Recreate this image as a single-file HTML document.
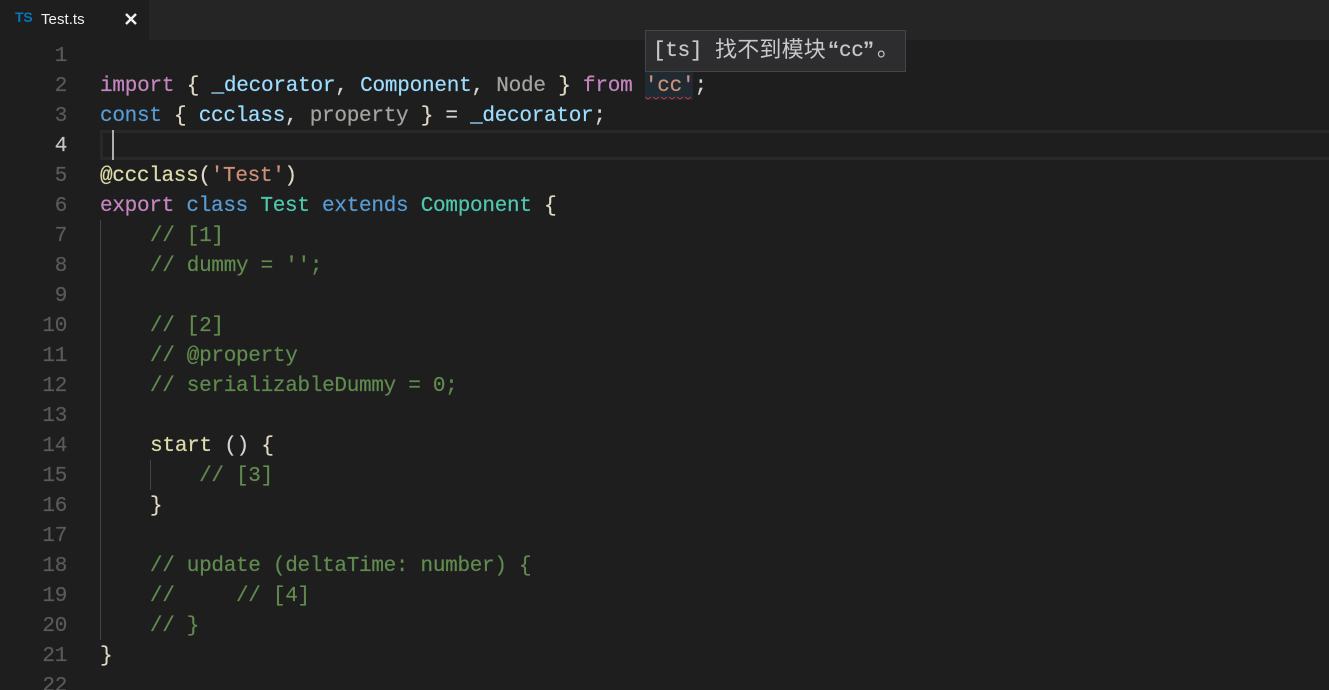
<!DOCTYPE html>
<html>
<head>
<meta charset="utf-8">
<style>
html,body{margin:0;padding:0;width:1329px;height:690px;overflow:hidden;background:#1e1e1e}
#root{position:relative;width:1329px;height:690px;overflow:hidden;background:#1e1e1e;font-family:"Liberation Mono","DejaVu Sans Mono",monospace}
.abs{position:absolute}
.ln,.cd{position:absolute;height:30px;line-height:34px;font-size:21px;white-space:pre;-webkit-text-stroke:.2px}
.ln{left:0;width:67px;text-align:right;color:#5a5a5a;letter-spacing:-.32px}
.cd{left:100px;color:#d4d4d4;letter-spacing:-.3px}
.i{left:100.7px}
.p{color:#c586c0}.k{color:#569cd6}.v{color:#9cdcfe}.t{color:#4ec9b0}.s{color:#ce9178}.c{color:#608b4e}.f{color:#dcdcaa}.u{color:#a5a5a0}.b{color:#e0d8c4}.w{color:#d4d4d4}
.tt{position:absolute;top:30px;height:42px;line-height:42px;color:#c8c8c8;white-space:pre;font-size:21px}
.cjk{font-family:"Liberation Sans","Noto Sans CJK SC",sans-serif;font-size:22px;line-height:42px}
</style>
</head>
<body>
<div id="root">
<div class="abs" style="left:149px;top:0;width:1180px;height:40px;background:#252526"></div>
<div class="abs" style="left:15px;top:8px;font:bold 14px 'Liberation Sans',sans-serif;color:#0277bd;line-height:18px;letter-spacing:-.2px">TS</div>
<div class="abs" style="left:41px;top:10px;font:15px 'Liberation Sans',sans-serif;color:#f0f0f0;line-height:20px;letter-spacing:.05px">Test.ts</div>
<svg class="abs" style="left:124px;top:12px" width="14" height="14" viewBox="0 0 14 14"><path d="M2 2L12 12M12 2L2 12" stroke="#f0f0f0" stroke-width="2.4" fill="none"/></svg>

<div class="abs" style="left:100px;top:130px;width:1229px;height:30px;box-sizing:border-box;border:3px solid #282828;border-right:0"></div>
<div class="abs" style="left:112px;top:130px;width:2px;height:30px;background:#aeafad"></div>
<div class="abs" style="left:100px;top:220px;width:1px;height:420px;background:#454545"></div>
<div class="abs" style="left:150px;top:460px;width:1px;height:30px;background:#454545"></div>
<div class="abs" style="left:645px;top:72px;width:48px;height:28px;background:#1f2a33"></div>
<svg class="abs" style="left:645px;top:96px" width="48" height="4" viewBox="0 0 48 4"><path d="M0 1L3 3L6 1M8 1L11 3L14 1M16 1L19 3L22 1M24 1L27 3L30 1M32 1L35 3L38 1M40 1L43 3L46 1" stroke="#c8383c" stroke-width="1" fill="none"/></svg>

<div class="ln" style="top:40px">1</div>
<div class="ln" style="top:70px">2</div>
<div class="ln" style="top:100px">3</div>
<div class="ln" style="top:130px;color:#c6c6c6">4</div>
<div class="ln" style="top:160px">5</div>
<div class="ln" style="top:190px">6</div>
<div class="ln" style="top:220px">7</div>
<div class="ln" style="top:250px">8</div>
<div class="ln" style="top:280px">9</div>
<div class="ln" style="top:310px">10</div>
<div class="ln" style="top:340px">11</div>
<div class="ln" style="top:370px">12</div>
<div class="ln" style="top:400px">13</div>
<div class="ln" style="top:430px">14</div>
<div class="ln" style="top:460px">15</div>
<div class="ln" style="top:490px">16</div>
<div class="ln" style="top:520px">17</div>
<div class="ln" style="top:550px">18</div>
<div class="ln" style="top:580px">19</div>
<div class="ln" style="top:610px">20</div>
<div class="ln" style="top:640px">21</div>
<div class="ln" style="top:670px">22</div>

<div class="cd" style="top:70px;letter-spacing:-.22px"><span class="p">import</span> <span class="b">{</span> <span class="v">_decorator</span>, <span class="v">Component</span>, <span class="u">Node</span> <span class="b">}</span> <span class="p">from</span> <span class="s">'cc'</span>;</div>
<div class="cd" style="top:100px;letter-spacing:-.27px"><span class="k">const</span> <span class="b">{</span> <span class="v">ccclass</span>, <span class="u">property</span> <span class="b">}</span> = <span class="v">_decorator</span>;</div>
<div class="cd" style="top:160px"><span class="f">@ccclass</span><span class="b">(</span><span class="s">'Test'</span><span class="b">)</span></div>
<div class="cd" style="top:190px;letter-spacing:-.27px"><span class="p">export</span> <span class="k">class</span> <span class="t">Test</span> <span class="k">extends</span> <span class="t">Component</span> <span class="b">{</span></div>
<div class="cd c i" style="top:220px">    // [1]</div>
<div class="cd c i" style="top:250px">    // dummy = '';</div>
<div class="cd c i" style="top:310px">    // [2]</div>
<div class="cd c i" style="top:340px">    // @property</div>
<div class="cd c i" style="top:370px">    // serializableDummy = 0;</div>
<div class="cd i" style="top:430px;letter-spacing:-.25px">    <span class="f">start</span> <span class="w">()</span> <span class="b">{</span></div>
<div class="cd c i" style="top:460px">        // [3]</div>
<div class="cd b i" style="top:490px">    }</div>
<div class="cd c i" style="top:550px">    // update (deltaTime: number) {</div>
<div class="cd c i" style="top:580px">    //     // [4]</div>
<div class="cd c i" style="top:610px">    // }</div>
<div class="cd b" style="top:640px">}</div>

<div class="abs" style="left:645px;top:30px;width:261px;height:42px;box-sizing:border-box;border:1px solid #454545;background:#2d2d30"></div>
<div class="tt" style="left:653px;top:31px;letter-spacing:-.3px;-webkit-text-stroke:.2px">[ts]</div>
<div class="tt cjk" style="left:715px;top:29px;letter-spacing:.2px">找不到模块</div>
<div class="tt cjk" style="left:828px;top:29px;font-weight:bold">“</div>
<div class="tt" style="left:839px;top:31px;letter-spacing:-.3px;-webkit-text-stroke:.2px">cc</div>
<div class="tt cjk" style="left:863px;top:29px;font-weight:bold">”</div>
<div class="tt cjk" style="left:877px;top:28px">。</div>
</div>
</body>
</html>
